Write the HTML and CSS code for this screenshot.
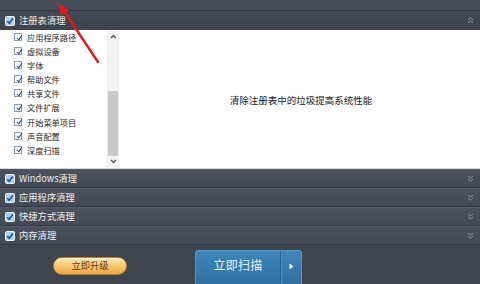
FILE: index.html
```html
<!DOCTYPE html>
<html lang="zh">
<head>
<meta charset="utf-8">
<title>注册表清理</title>
<link rel="stylesheet" href="styles.css">
</head>
<body>
<div class="app">
  <div class="topbar"></div>
  <div class="head">
    <span class="cb"><svg viewBox="0 0 10 10" width="10" height="10"><rect x="0.5" y="0.5" width="9" height="9" rx="1" fill="#a9d2ee" stroke="#eef5fb"/><path d="M2.3 5.2 L4.2 7.2 L7.8 2.6" fill="none" stroke="#1d4f8c" stroke-width="1.6"/></svg></span>
    <span class="title">注册表清理</span>
    <span class="chev"><svg viewBox="0 0 7 7" width="7" height="7"><path d="M1 3 L3.5 1 L6 3 M1 6 L3.5 4 L6 6" fill="none" stroke="#8d939c" stroke-width="1"/></svg></span>
  </div>
  <div class="panel">
    <div class="list">
      <div class="item"><span class="lcb"></span>应用程序路径</div>
      <div class="item"><span class="lcb"></span>虚拟设备</div>
      <div class="item"><span class="lcb"></span>字体</div>
      <div class="item"><span class="lcb"></span>帮助文件</div>
      <div class="item"><span class="lcb"></span>共享文件</div>
      <div class="item"><span class="lcb"></span>文件扩展</div>
      <div class="item"><span class="lcb"></span>开始菜单项目</div>
      <div class="item"><span class="lcb"></span>声音配置</div>
      <div class="item"><span class="lcb"></span>深度扫描</div>
    </div>
    <div class="scroll">
      <span class="sarrow"><svg viewBox="0 0 7 5" width="7" height="5"><path d="M1 4 L3.5 1.5 L6 4" fill="none" stroke="#555" stroke-width="1.4"/></svg></span>
      <span class="strack"><span class="thumb"></span></span>
      <span class="sarrow"><svg viewBox="0 0 7 5" width="7" height="5"><path d="M1 1 L3.5 3.5 L6 1" fill="none" stroke="#555" stroke-width="1.4"/></svg></span>
    </div>
    <div class="main">清除注册表中的垃圾提高系统性能</div>
  </div>
  <div class="row"><span class="cb"><svg viewBox="0 0 10 10" width="10" height="10"><rect x="0.5" y="0.5" width="9" height="9" rx="1" fill="#a9d2ee" stroke="#eef5fb"/><path d="M2.3 5.2 L4.2 7.2 L7.8 2.6" fill="none" stroke="#1d4f8c" stroke-width="1.6"/></svg></span><span class="title">Windows清理</span><span class="chev"><svg viewBox="0 0 7 7" width="7" height="7"><path d="M1 1 L3.5 3 L6 1 M1 4 L3.5 6 L6 4" fill="none" stroke="#8d939c" stroke-width="1"/></svg></span></div>
  <div class="row"><span class="cb"><svg viewBox="0 0 10 10" width="10" height="10"><rect x="0.5" y="0.5" width="9" height="9" rx="1" fill="#a9d2ee" stroke="#eef5fb"/><path d="M2.3 5.2 L4.2 7.2 L7.8 2.6" fill="none" stroke="#1d4f8c" stroke-width="1.6"/></svg></span><span class="title">应用程序清理</span><span class="chev"><svg viewBox="0 0 7 7" width="7" height="7"><path d="M1 1 L3.5 3 L6 1 M1 4 L3.5 6 L6 4" fill="none" stroke="#8d939c" stroke-width="1"/></svg></span></div>
  <div class="row"><span class="cb"><svg viewBox="0 0 10 10" width="10" height="10"><rect x="0.5" y="0.5" width="9" height="9" rx="1" fill="#a9d2ee" stroke="#eef5fb"/><path d="M2.3 5.2 L4.2 7.2 L7.8 2.6" fill="none" stroke="#1d4f8c" stroke-width="1.6"/></svg></span><span class="title">快捷方式清理</span><span class="chev"><svg viewBox="0 0 7 7" width="7" height="7"><path d="M1 1 L3.5 3 L6 1 M1 4 L3.5 6 L6 4" fill="none" stroke="#8d939c" stroke-width="1"/></svg></span></div>
  <div class="row"><span class="cb"><svg viewBox="0 0 10 10" width="10" height="10"><rect x="0.5" y="0.5" width="9" height="9" rx="1" fill="#a9d2ee" stroke="#eef5fb"/><path d="M2.3 5.2 L4.2 7.2 L7.8 2.6" fill="none" stroke="#1d4f8c" stroke-width="1.6"/></svg></span><span class="title">内存清理</span><span class="chev"><svg viewBox="0 0 7 7" width="7" height="7"><path d="M1 1 L3.5 3 L6 1 M1 4 L3.5 6 L6 4" fill="none" stroke="#8d939c" stroke-width="1"/></svg></span></div>
  <div class="bottom">
    <button class="upgrade">立即升级</button>
    <div class="scan"><span class="scan-label">立即扫描</span><span class="scan-more"><svg viewBox="0 0 5 7" width="5" height="7"><path d="M0.5 0.5 L4.5 3.5 L0.5 6.5 Z" fill="#ffffff"/></svg></span></div>
  </div>
  <svg class="annot" viewBox="0 0 480 284" width="480" height="284">
    <line x1="98" y1="62" x2="64" y2="11" stroke="#e3191b" stroke-width="2.4" stroke-linecap="round"/>
    <path d="M58 3 L69 10.5 L61 15 Z" fill="#e3191b"/>
  </svg>
</div>
</body>
</html>
```
FILE: styles.css
```css
* { box-sizing: border-box; }
html, body { margin: 0; padding: 0; }
body {
  width: 480px;
  height: 284px;
  overflow: hidden;
  background: #3f444e;
  font-family: "Noto Sans CJK SC", "Noto Sans", sans-serif;
}
.app { position: relative; width: 480px; height: 284px; display: flex; flex-direction: column; }
.app > * { flex-shrink: 0; }
.topbar {
  height: 11px;
  background: #484e59;
  border-bottom: 1px solid #353a43;
}
.head, .row {
  display: flex;
  align-items: center;
  padding: 0 6px 0 5px;
  color: #eceef1;
  font-size: 9.3px;
}
.head {
  height: 19px;
  background: linear-gradient(#454b56, #3d434d);
}
.row {
  height: 19px;
  background: linear-gradient(#4c525d, #434954);
  border-bottom: 1px solid #353a42;
  border-top: 1px solid #555b66;
}
.cb { width: 10px; height: 10px; display: flex; }
.title { margin-left: 4px; flex: 1; line-height: 1; }
.chev { display: flex; width: 7px; height: 7px; }
.panel {
  height: 139px;
  background: #ffffff;
  display: flex;
  border-bottom: 1px solid #d8d8d8;
}
.list {
  width: 107px;
  padding: 0 0 0 14px;
  font-size: 8.2px;
  color: #2a2a2a;
}
.item {
  height: 14.1px;
  display: flex;
  align-items: center;
  line-height: 1;
}
.lcb {
  width: 8px;
  height: 8px;
  margin-right: 5px;
  border: 1px solid #8e9cab;
  background: #f4f7fa;
  position: relative;
}
.lcb::after {
  content: "";
  position: absolute;
  left: 2.5px;
  top: -0.5px;
  width: 2px;
  height: 5px;
  border-right: 1.3px solid #1f4fa3;
  border-bottom: 1.3px solid #1f4fa3;
  transform: rotate(35deg);
}
.scroll {
  width: 11px;
  margin: 1px 0;
  background: #f3f3f3;
  border-left: 1px solid #ececec;
  display: flex;
  flex-direction: column;
  align-items: stretch;
}
.sarrow { height: 11px; display: flex; align-items: center; justify-content: center; }
.strack { flex: 1; display: flex; flex-direction: column; justify-content: flex-end; }
.thumb { height: 65px; background: #c9c9c9; }
.main {
  flex: 1;
  border-left: 1px solid #eeeeee;
  display: flex;
  align-items: center;
  justify-content: center;
  font-size: 9.5px;
  color: #222;
  padding: 2px 0 0 3px;
}
.bottom {
  flex: 1 1 auto;
  min-height: 0;
  overflow: hidden;
  display: flex;
  align-items: flex-start;
  padding-left: 53px;
  background: #3f444e;
}
.upgrade {
  flex-shrink: 0;
  margin-top: 12px;
  width: 74px;
  height: 18px;
  border-radius: 9px;
  border: 1px solid #b97f2c;
  background: linear-gradient(#fde7b4, #f5c46e 55%, #e8a749);
  color: #5a3a10;
  font-family: inherit;
  font-size: 9.3px;
  padding: 0;
  line-height: 1;
  box-shadow: inset 0 1px 0 #fff4d8;
}
.scan {
  flex-shrink: 0;
  margin-left: 68px;
  margin-top: 5px;
  width: 107px;
  height: 38px;
  border-radius: 3px;
  border: 1px solid #5b95c2;
  background: linear-gradient(#3f86ba, #2f6e9f);
  display: flex;
  color: #e8f1f8;
}
.scan-label {
  flex: 1;
  display: flex;
  align-items: flex-start;
  justify-content: center;
  padding-top: 8px;
  font-size: 12px;
  line-height: 1;
  letter-spacing: 0.3px;
}
.scan-more {
  width: 21px;
  border-left: 1px solid #2a6190;
  box-shadow: inset 1px 0 0 #4f8fc0;
  display: flex;
  justify-content: center;
  padding-top: 12px;
}
.scan-more svg { display: block; }
.annot { position: absolute; left: 0; top: 0; pointer-events: none; }
```
